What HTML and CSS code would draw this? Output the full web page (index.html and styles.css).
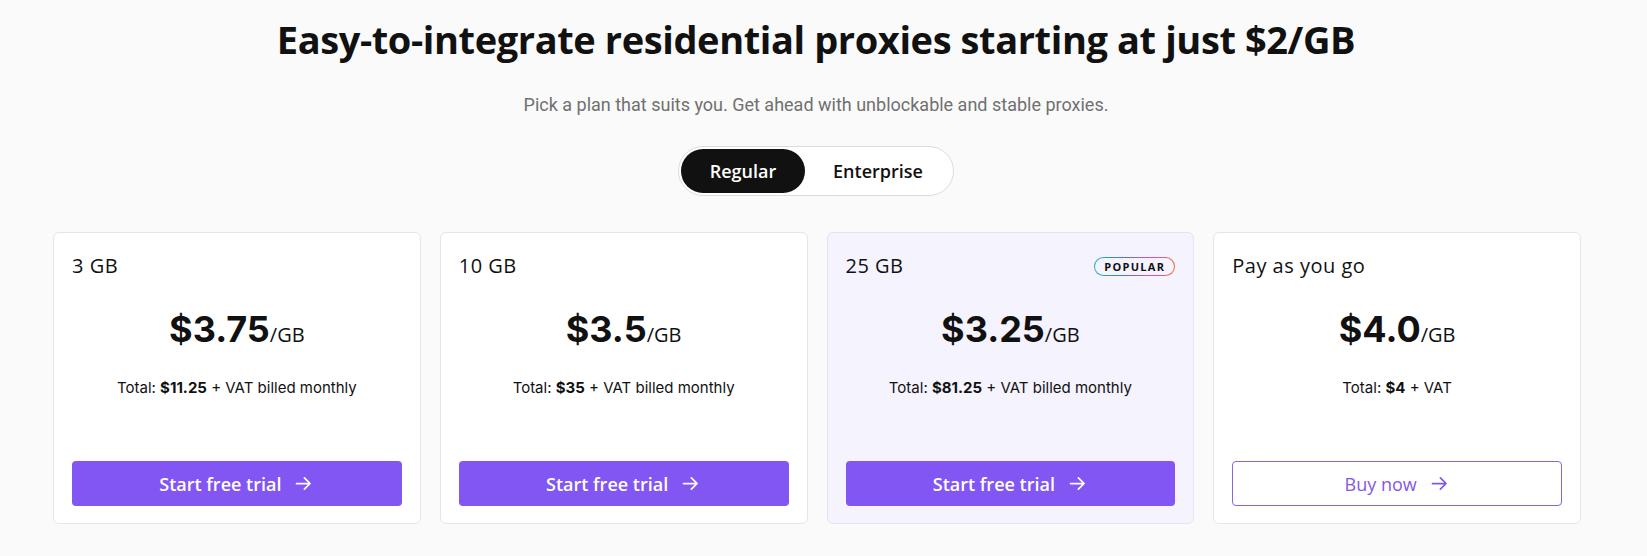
FILE: index.html
```html
<!DOCTYPE html>
<html lang="en">
<head>
  <meta charset="UTF-8"/>
  <meta name="viewport" content="width=device-width, initial-scale=1.0"/>
  <title>Residential proxies pricing</title>
  <link rel="stylesheet" href="styles.css">
</head>
<body>

  <section class="pricing">
    <h1>Easy-to-integrate residential proxies starting at just $2/GB</h1>
    <p class="subtitle">Pick a plan that suits you. Get ahead with unblockable and stable proxies.</p>

    <div class="toggle">
      <button class="toggle-btn active">Regular</button>
      <button class="toggle-btn">Enterprise</button>
    </div>

    <div class="plans">
      <!-- 3 GB -->
      <div class="plan">
        <div class="plan-head">
          <span class="plan-name">3 GB</span>
        </div>
        <div class="price"><span class="amount">$3.75</span><span class="unit">/GB</span></div>
        <p class="total">Total: <b>$11.25</b> + VAT billed monthly</p>
        <a href="#" class="btn">Start free trial
          <svg viewBox="0 0 24 24" width="21" height="21"><path d="M4 12h15M13 5.5l6.5 6.5-6.5 6.5"/></svg>
        </a>
      </div>

      <!-- 10 GB -->
      <div class="plan">
        <div class="plan-head">
          <span class="plan-name">10 GB</span>
        </div>
        <div class="price"><span class="amount">$3.5</span><span class="unit">/GB</span></div>
        <p class="total">Total: <b>$35</b> + VAT billed monthly</p>
        <a href="#" class="btn">Start free trial
          <svg viewBox="0 0 24 24" width="21" height="21"><path d="M4 12h15M13 5.5l6.5 6.5-6.5 6.5"/></svg>
        </a>
      </div>

      <!-- 25 GB -->
      <div class="plan popular">
        <div class="plan-head">
          <span class="plan-name">25 GB</span>
          <span class="badge">POPULAR</span>
        </div>
        <div class="price"><span class="amount">$3.25</span><span class="unit">/GB</span></div>
        <p class="total">Total: <b>$81.25</b> + VAT billed monthly</p>
        <a href="#" class="btn">Start free trial
          <svg viewBox="0 0 24 24" width="21" height="21"><path d="M4 12h15M13 5.5l6.5 6.5-6.5 6.5"/></svg>
        </a>
      </div>

      <!-- Pay as you go -->
      <div class="plan">
        <div class="plan-head">
          <span class="plan-name">Pay as you go</span>
        </div>
        <div class="price"><span class="amount">$4.0</span><span class="unit">/GB</span></div>
        <p class="total">Total: <b>$4</b> + VAT</p>
        <a href="#" class="btn btn-outline">Buy now
          <svg viewBox="0 0 24 24" width="21" height="21"><path d="M4 12h15M13 5.5l6.5 6.5-6.5 6.5"/></svg>
        </a>
      </div>
    </div>
  </section>

</body>
</html>
```

FILE: styles.css
```css
body {
  margin: 0;
  padding: 0;
  background: #fafafa;
  color: #111;
  font-family: 'Open Sans', sans-serif;
}

.pricing {
  padding: 13px 15px 0 0;
  text-align: center;
}

h1 {
  margin: 0;
  font-size: 38px;
  line-height: 52px;
  font-weight: 700;
  letter-spacing: -0.4px;
  color: #111;
}

.subtitle {
  margin: 28px 0 0;
  font-family: Roboto, sans-serif;
  font-size: 18px;
  line-height: 24px;
  color: #707070;
}

.toggle {
  display: inline-flex;
  margin-top: 29px;
  padding: 2px;
  border: 1px solid #dcdcdc;
  border-radius: 30px;
  background: white;
}

.toggle-btn {
  border: none;
  background: none;
  font-family: 'Open Sans', sans-serif;
  font-size: 18px;
  font-weight: 600;
  color: #111;
  height: 44px;
  border-radius: 24px;
  cursor: pointer;
}

.toggle-btn:first-child {
  width: 124px;
}

.toggle-btn:last-child {
  width: 146px;
}

.toggle-btn.active {
  background: #111;
  color: white;
}

.plans {
  display: flex;
  gap: 19px;
  width: 1528px;
  margin: 36px 0 0 53px;
}

.plan {
  flex: 1;
  height: 292px;
  box-sizing: border-box;
  display: flex;
  flex-direction: column;
  padding: 18px 18px 17px;
  background: white;
  border: 1px solid #e6e6e6;
  border-radius: 6px;
}

.plan.popular {
  background: #f5f3fe;
  border-color: #e6e2f5;
}

.plan-head {
  display: flex;
  justify-content: space-between;
  align-items: center;
  height: 30px;
}

.plan-name {
  font-size: 20px;
  line-height: 30px;
  letter-spacing: 0.5px;
  color: #111;
}

.badge {
  font-size: 11px;
  font-weight: 700;
  letter-spacing: 1.3px;
  line-height: 15px;
  padding: 1px 9px;
  border: 1.5px solid transparent;
  border-radius: 12px;
  background: linear-gradient(#f5f3fe, #f5f3fe) padding-box,
              linear-gradient(90deg, #1cb5c9, #4b72f0 35%, #d44fd0 70%, #f56a2c) border-box;
}

.price {
  margin-top: 25px;
  line-height: 46px;
}

.amount {
  font-family: Inter, sans-serif;
  font-size: 36px;
  font-weight: 700;
  color: #111;
}

.unit {
  font-size: 20px;
  color: #111;
}

.total {
  margin: 18px 0 0;
  font-family: Inter, sans-serif;
  font-size: 15px;
  line-height: 22px;
  color: #111;
}

.total b {
  font-weight: 700;
}

.btn {
  margin-top: auto;
  height: 45px;
  display: flex;
  align-items: center;
  justify-content: center;
  gap: 12px;
  background: #8256f2;
  color: white;
  border-radius: 4px;
  text-decoration: none;
  font-size: 18px;
  font-weight: 600;
}

.btn svg {
  fill: none;
  stroke: currentColor;
  stroke-width: 2;
  stroke-linecap: round;
  stroke-linejoin: round;
}

.btn-outline {
  box-sizing: border-box;
  background: white;
  color: #8358e8;
  border: 1px solid #8a64e6;
  font-weight: 500;
}
```
